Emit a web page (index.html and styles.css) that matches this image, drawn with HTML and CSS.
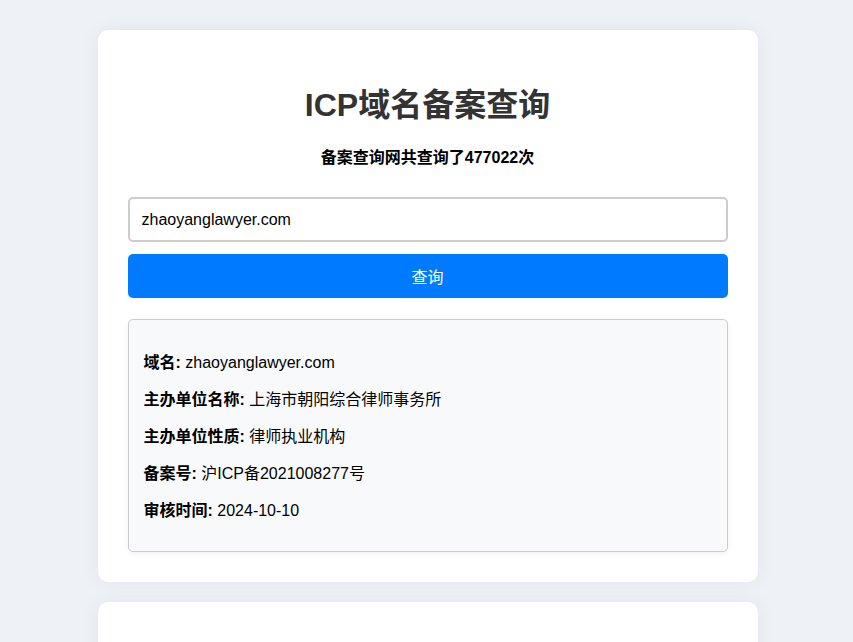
FILE: index.html
```html
<!DOCTYPE html>
<html lang="zh-CN">
<head>
<meta charset="utf-8">
<title>ICP域名备案查询</title>
<link rel="stylesheet" href="styles.css">
</head>
<body>
<div class="page">
  <div class="card">
    <h1 class="title">ICP域名备案查询</h1>
    <p class="count">备案查询网共查询了477022次</p>
    <input class="domain" type="text" value="zhaoyanglawyer.com">
    <button class="submit">查询</button>
    <div class="result">
      <p class="row"><strong>域名:</strong> zhaoyanglawyer.com</p>
      <p class="row"><strong>主办单位名称:</strong> 上海市朝阳综合律师事务所</p>
      <p class="row"><strong>主办单位性质:</strong> 律师执业机构</p>
      <p class="row"><strong>备案号:</strong> 沪ICP备2021008277号</p>
      <p class="row"><strong>审核时间:</strong> 2024-10-10</p>
    </div>
  </div>
  <div class="card card-next"></div>
</div>
</body>
</html>
```

FILE: styles.css
```css
html, body {
  margin: 0;
  padding: 0;
}
body {
  background: #eef1f5;
  font-family: "Liberation Sans", Arial, "Noto Sans CJK SC", sans-serif;
  color: #000;
  overflow: hidden;
  padding-left: 2px;
}
.page {
  width: 660px;
  margin: 30px auto 0;
  display: flex;
  flex-direction: column;
  gap: 20px;
}
.card {
  background: #fff;
  border-radius: 10px;
  padding: 30px;
  box-shadow: 0 0 20px rgba(0, 0, 0, 0.06);
}
.card-next {
  height: 200px;
}
.title {
  margin: 25px 0 0;
  text-align: center;
  font-size: 32px;
  line-height: 40px;
  font-weight: bold;
  color: #333;
}
.count {
  margin: 22px 0 0;
  text-align: center;
  font-size: 16px;
  line-height: 22px;
  font-weight: bold;
}
.domain {
  display: block;
  box-sizing: border-box;
  width: 100%;
  height: 45px;
  margin-top: 28px;
  padding: 0 12px;
  border: 2px solid #ccc;
  border-radius: 5px;
  font-family: inherit;
  font-size: 16px;
  color: #000;
  background: #fff;
  outline: none;
}
.submit {
  display: block;
  width: 100%;
  height: 44px;
  margin-top: 12px;
  border: none;
  border-radius: 5px;
  background: #007bff;
  color: #fff;
  font-family: inherit;
  font-size: 16px;
}
.result {
  margin-top: 21px;
  padding: 16px 15px 14px;
  background: #f8f9fa;
  border: 1px solid #ccc;
  border-radius: 5px;
  box-shadow: 0 2px 6px rgba(0, 0, 0, 0.06);
}
.row {
  margin: 16px 0;
  font-size: 16px;
  line-height: 21px;
}
```
